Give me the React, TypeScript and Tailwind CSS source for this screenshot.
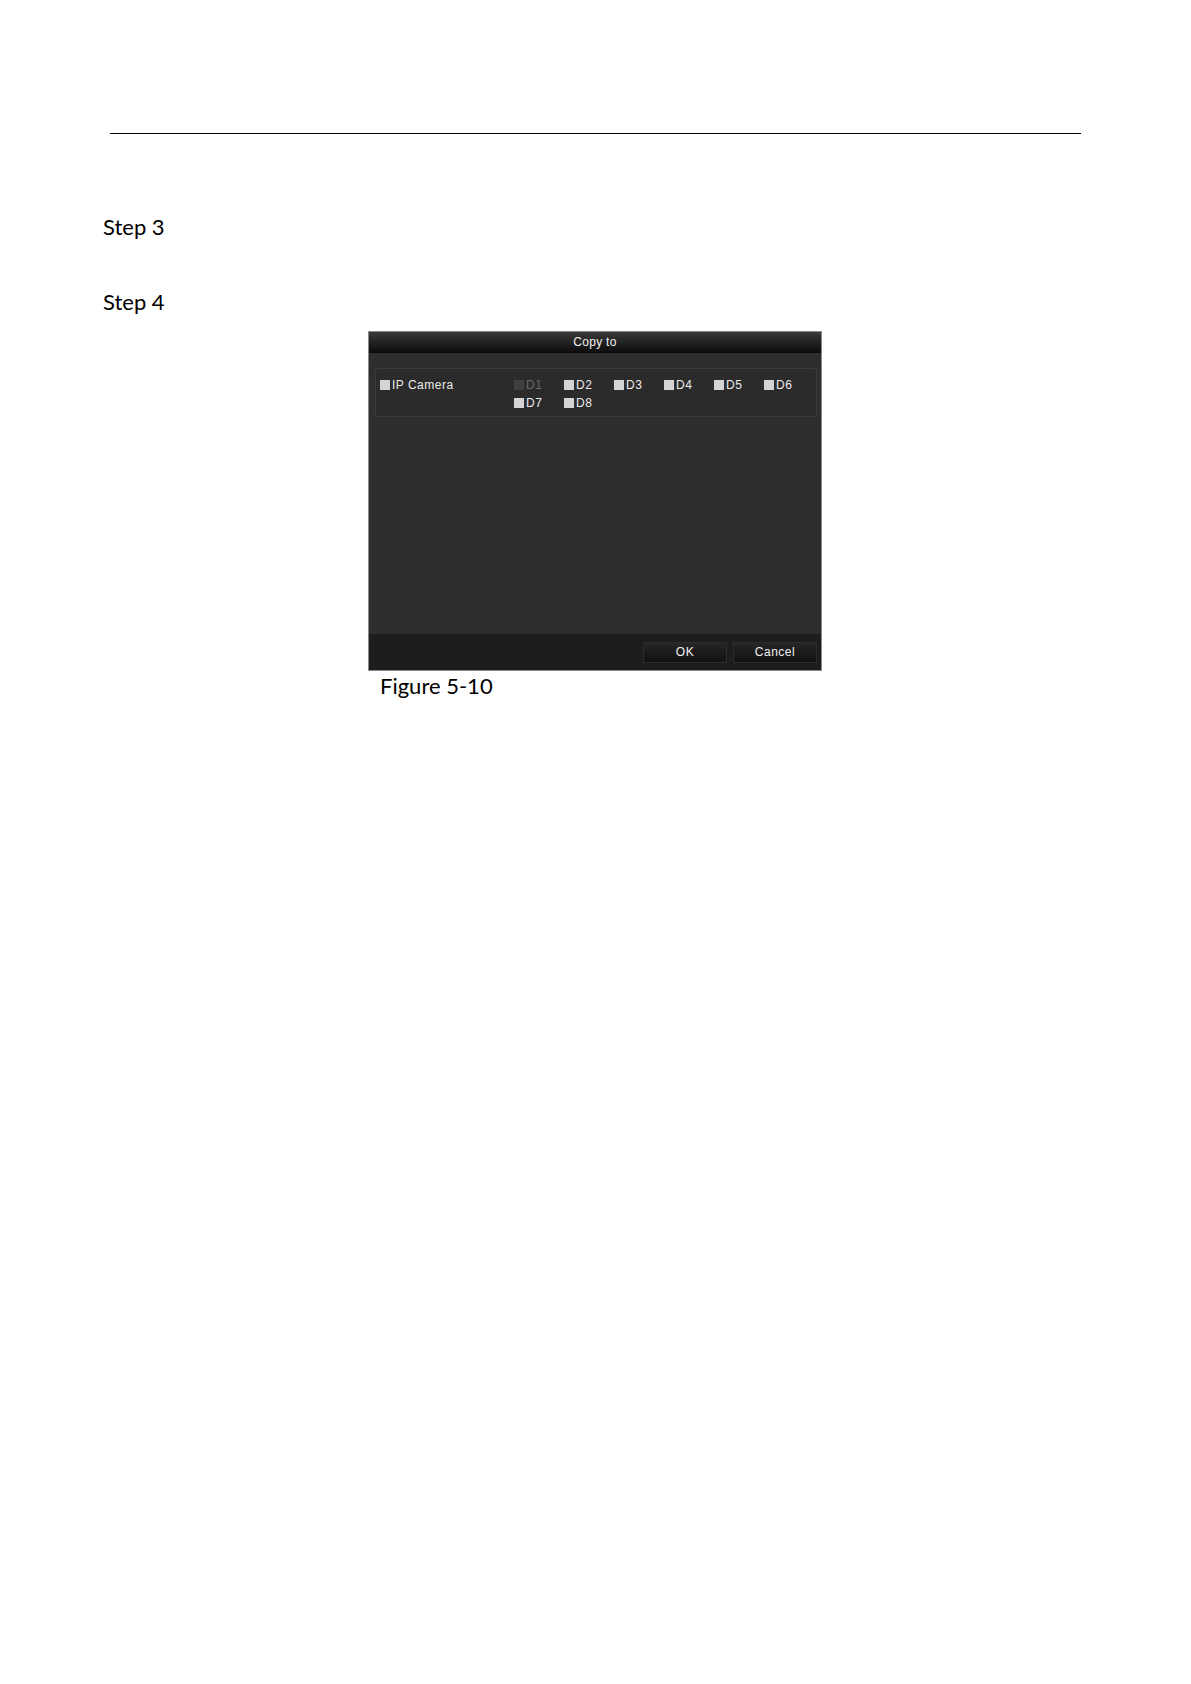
import React from "react";

function Box({ disabled }: { disabled?: boolean }) {
  return (
    <span
      className={
        "inline-block w-[10px] h-[10px] mr-[2px] " +
        (disabled ? "bg-[#3f3f3f]" : "bg-[#d4d4d4]")
      }
    />
  );
}

function Ch({ label, disabled }: { label: string; disabled?: boolean }) {
  return (
    <div className="flex items-center h-[18px] w-[50px]">
      <Box disabled={disabled} />
      <span className={disabled ? "text-[#6a6a6a]" : "text-[#ececec]"}>{label}</span>
    </div>
  );
}

export default function App() {
  const ff = { fontFamily: "Lato, 'Open Sans', sans-serif" };
  return (
    <div className="w-[1191px] h-[1684px] bg-white relative overflow-hidden">
      <div className="pt-[133px] pl-[110px]">
        <div className="w-[971px] h-px bg-black" />
      </div>
      <div className="pl-[103px] pt-[78px] text-[22px] leading-[30px] text-black" style={ff}>
        Step 3
      </div>
      <div className="pl-[103px] pt-[45px] text-[22px] leading-[30px] text-black" style={ff}>
        Step 4
      </div>
      <div className="ml-[368px] mt-[14px] w-[454px] h-[340px] border border-[#8a8a8a] bg-[#2e2e2e] flex flex-col" style={{ fontFamily: "'Liberation Sans', Arial, sans-serif" }}>
        <div className="h-[21px] bg-gradient-to-b from-[#3a3a3a] to-[#0c0c0c] text-[#f0f0f0] text-[12px] leading-[21px] text-center tracking-[0.3px]">
          Copy to
        </div>
        <div className="flex-1 px-[6px] pt-[15px] pr-[4px]">
          <div className="h-[49px] border border-[#3b3b3b] bg-[#2b2b2b] rounded-[2px] flex pl-[4px] pt-[7px] text-[12px] tracking-[0.5px]">
            <div className="w-[134px] flex items-start">
              <div className="flex items-center h-[18px] text-[#ececec]">
                <Box />
                <span>IP Camera</span>
              </div>
            </div>
            <div className="grid grid-cols-[repeat(6,50px)] content-start">
              <Ch label="D1" disabled />
              <Ch label="D2" />
              <Ch label="D3" />
              <Ch label="D4" />
              <Ch label="D5" />
              <Ch label="D6" />
              <Ch label="D7" />
              <Ch label="D8" />
            </div>
          </div>
        </div>
        <div className="h-[36px] bg-[#1d1d1d] flex justify-end items-start pt-[8px] pr-[4px] gap-[6px]">
          <div className="w-[84px] h-[21px] border border-[#2c2c2c] bg-gradient-to-b from-[#262626] to-[#121212] text-[#f2f2f2] text-[12px] leading-[19px] text-center tracking-[0.5px]">
            OK
          </div>
          <div className="w-[84px] h-[21px] border border-[#2c2c2c] bg-gradient-to-b from-[#262626] to-[#121212] text-[#f2f2f2] text-[12px] leading-[19px] text-center tracking-[0.5px]">
            Cancel
          </div>
        </div>
      </div>
      <div className="pl-[380px] text-[22px] leading-[30px] text-black" style={ff}>
        Figure 5-10
      </div>
    </div>
  );
}
